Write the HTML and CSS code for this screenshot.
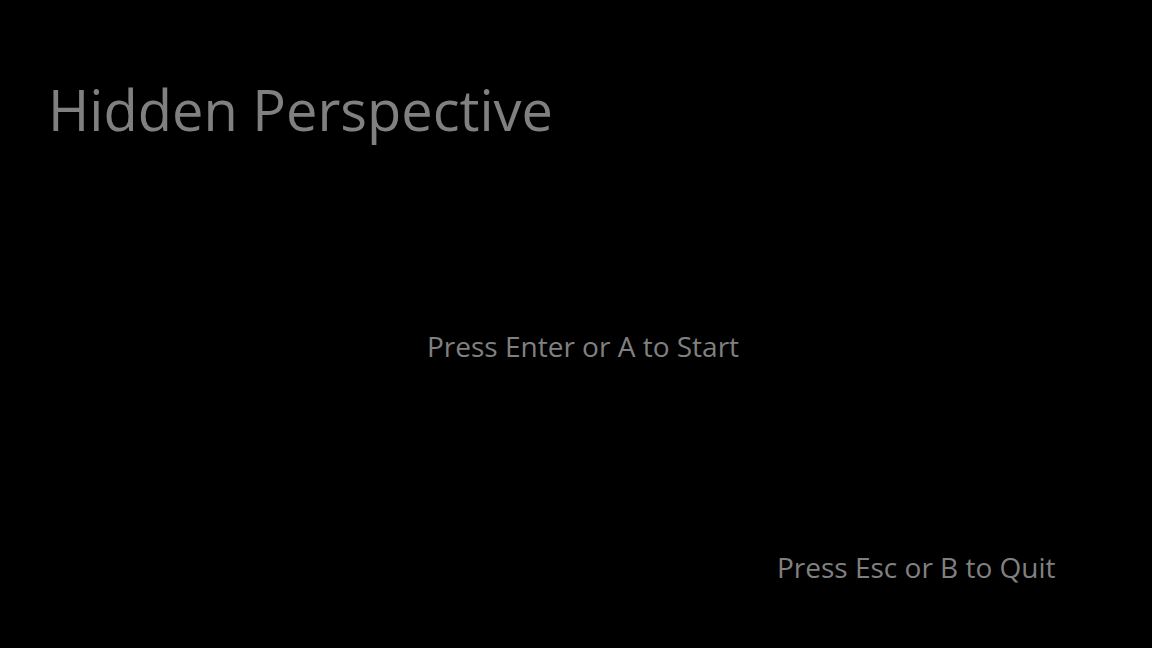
FILE: index.html
```html
<!DOCTYPE html>
<html>
<head>
<meta charset="utf-8">
<link rel="stylesheet" href="styles.css">
</head>
<body>
<main class="screen">
  <h1 class="title">Hidden Perspective</h1>
  <div class="start-row"><span class="prompt start">Press Enter or A to Start</span></div>
  <div class="quit-row"><span class="prompt quit">Press Esc or B to Quit</span></div>
</main>
</body>
</html>
```

FILE: styles.css
```css
html, body {
  margin: 0;
  padding: 0;
  background: #000;
  width: 1152px;
  height: 648px;
  overflow: hidden;
}
.screen {
  width: 1152px;
  height: 648px;
  box-sizing: border-box;
  display: flex;
  flex-direction: column;
  font-family: "Open Sans", "Noto Sans", sans-serif;
  color: #808080;
}
.title {
  margin: 0;
  padding: 75px 0 0 48px;
  font-size: 56px;
  font-weight: 400;
  line-height: 68px;
}
.start-row {
  padding: 185px 0 0 427px;
}
.quit-row {
  padding: 185px 0 0 777px;
}
.prompt {
  font-size: 28px;
  line-height: 36px;
}
```
